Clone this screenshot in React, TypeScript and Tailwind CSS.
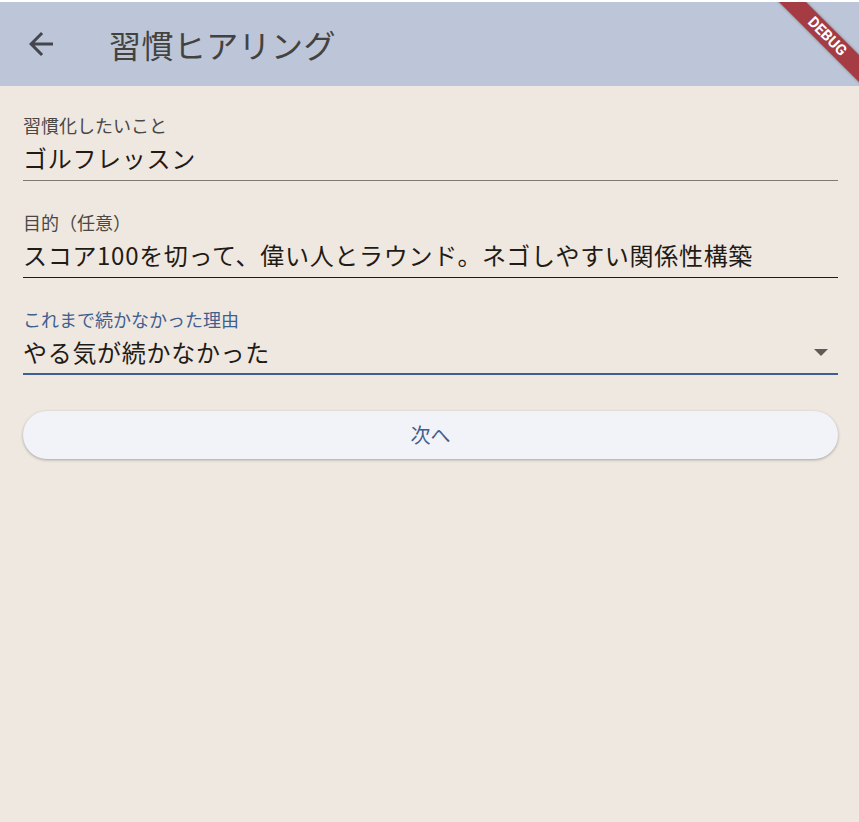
import React from "react";

const font = { fontFamily: '"Noto Sans CJK JP", "Noto Sans", sans-serif' };

type FieldProps = {
  label: string;
  value: string;
  variant: "idle" | "hover" | "focus";
  dropdown?: boolean;
};

const Field = ({ label, value, variant, dropdown }: FieldProps) => {
  const line =
    variant === "focus"
      ? "border-b-2 border-[#3f5f90]"
      : variant === "hover"
        ? "border-b border-[#1f1b17]"
        : "border-b border-[#7f7a76]";
  return (
    <div className={`flex flex-col ${line}`}>
      <div
        className={`h-6 text-[18px] leading-6 ${variant === "focus" ? "text-[#3f5f90]" : "text-[#4a4744]"}`}
      >
        {label}
      </div>
      <div className={`mt-[5px] flex h-8 items-center ${variant === "focus" ? "mb-[5px]" : "mb-[6px]"}`}>
        <span className="flex-1 text-[24px] leading-8 tracking-[0.7px] text-[#1f1b17]">{value}</span>
        {dropdown && (
          <svg width="14" height="7" viewBox="0 0 14 7" className="mr-[10px]">
            <polygon points="0,0 14,0 7,7" fill="#5e5a57" />
          </svg>
        )}
      </div>
    </div>
  );
};

export default function App() {
  return (
    <div className="relative min-h-[822px] w-full overflow-hidden bg-[#efe8e1]" style={font}>
      <div className="h-[2px] bg-white" />
      <header className="flex h-[84px] items-center bg-[#bdc6d8]">
        <button className="ml-[23px] flex h-9 w-9 items-center justify-center">
          <svg width="36" height="36" viewBox="0 0 24 24">
            <path d="M20 11H7.83l5.59-5.59L12 4l-8 8 8 8 1.41-1.41L7.83 13H20v-2z" fill="#44464d" />
          </svg>
        </button>
        <h1 className="ml-[50px] text-[32px] leading-10 tracking-[0.4px] text-[#44423f]">習慣ヒアリング</h1>
      </header>

      <main className="flex flex-col pl-[23px] pr-[21px] pt-[27px]">
        <div className="flex flex-col gap-[29px]">
          <Field label="習慣化したいこと" value="ゴルフレッスン" variant="idle" />
          <Field
            label="目的（任意）"
            value="スコア100を切って、偉い人とラウンド。ネゴしやすい関係性構築"
            variant="hover"
          />
          <Field label="これまで続かなかった理由" value="やる気が続かなかった" variant="focus" dropdown />
        </div>

        <button className="mt-[36px] flex h-12 items-center justify-center rounded-full bg-[#f2f3f9] text-[20px] text-[#3f5f90] shadow-[0_1px_3px_rgba(0,0,0,0.3)]">
          次へ
        </button>
      </main>

      <div className="pointer-events-none absolute right-0 top-[2px] h-[100px] w-[100px] overflow-hidden">
        <div className="absolute left-[-32px] top-[25px] flex h-[19px] w-[200px] rotate-45 items-center justify-center bg-[#a63c43] shadow-[0_0_3px_rgba(0,0,0,0.4)]">
          <span
            className="text-[15px] font-bold leading-none text-white"
            style={{ fontFamily: '"Roboto", "Noto Sans", sans-serif' }}
          >
            DEBUG
          </span>
        </div>
      </div>
    </div>
  );
}
